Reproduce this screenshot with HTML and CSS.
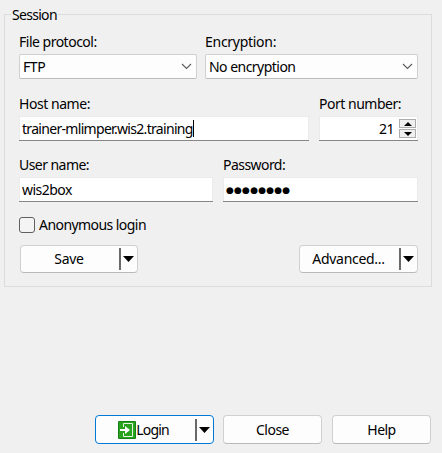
FILE: index.html
```html
<!DOCTYPE html>
<html lang="en">
<head>
<meta charset="utf-8">
<title>Login</title>
<link rel="stylesheet" href="styles.css">
</head>
<body>
<main class="dialog">
  <section class="group">
    <h1 class="legend"><span class="t-session">Session</span></h1>
    <div class="row row-protocol">
      <div class="field">
        <span class="label t-file">File protocol:</span>
        <div class="select"><span class="t-ftp">FTP</span><svg class="chevron" viewBox="0 0 11 7"><path d="M1 1l4.5 4.5L10 1"/></svg></div>
      </div>
      <div class="field">
        <span class="label t-enc">Encryption:</span>
        <div class="select"><span class="t-noenc">No encryption</span><svg class="chevron" viewBox="0 0 11 7"><path d="M1 1l4.5 4.5L10 1"/></svg></div>
      </div>
    </div>
    <div class="row row-host">
      <div class="field">
        <span class="label t-host">Host name:</span>
        <div class="input"><span class="t-trainer">trainer-mlimper.wis2.training</span><i class="caret"></i></div>
      </div>
      <div class="field">
        <span class="label t-port">Port number:</span>
        <div class="input number"><span class="t-21">21</span>
          <div class="spin">
            <div class="step"><svg viewBox="0 0 8 4"><path d="M4 0L8 4H0z"/></svg></div>
            <div class="step"><svg viewBox="0 0 8 4"><path d="M0 0H8L4 4z"/></svg></div>
          </div>
        </div>
      </div>
    </div>
    <div class="row row-user">
      <div class="field">
        <span class="label t-user">User name:</span>
        <div class="input"><span class="t-wis">wis2box</span></div>
      </div>
      <div class="field">
        <span class="label t-pass">Password:</span>
        <div class="input password"><span class="bullets">●●●●●●●●</span></div>
      </div>
    </div>
    <div class="check"><i class="box"></i><span class="t-anon">Anonymous login</span></div>
    <div class="actions">
      <div class="button split save"><div class="face"><span class="t-save">Save</span></div><i class="divider"></i><svg class="arrow" viewBox="0 0 11 6"><path d="M0 0H11L5.5 6z"/></svg></div>
      <div class="button split"><div class="face"><span class="t-adv">Advanced...</span></div><i class="divider"></i><svg class="arrow" viewBox="0 0 11 6"><path d="M0 0H11L5.5 6z"/></svg></div>
    </div>
  </section>
  <footer class="footer">
    <div class="button split default"><div class="face"><svg class="icon" viewBox="0 0 18 18"><rect width="18" height="18" rx="1" fill="#168016"/><rect x="1" y="1" width="16" height="16" fill="#29a31f"/><path d="M5.5 6V2.5H14.5V15.5H5.5V12" fill="none" stroke="#e4f6e0" stroke-width="1"/><path d="M2 8H7V5L12 9L7 13V10H2z" fill="#fff"/></svg><span class="t-login">Login</span></div><i class="divider"></i><svg class="arrow" viewBox="0 0 11 6"><path d="M0 0H11L5.5 6z"/></svg></div>
    <div class="button"><span class="t-close">Close</span></div>
    <div class="button"><span class="t-help">Help</span></div>
  </footer>
</main>
</body>
</html>
```
FILE: styles.css
```css
* { box-sizing: border-box; }
body { margin: 0; background: #f0f0f0; color: #000; font: 14px/18px "Noto Sans", "Open Sans", sans-serif; letter-spacing: -0.53px; }
.dialog { width: 442px; height: 453px; padding: 14px 11px 0 4px; overflow: hidden; }
.group { height: 273px; width: 428px; border: 1px solid #dcdcdc; padding: 0 13px 0 14px; }
.legend { margin: -9px 0 0 -8px; height: 18px; font: inherit; }
.legend span { display: inline-block; background: #f0f0f0; padding: 0 1px; letter-spacing: -0.7px; }
span { white-space: nowrap; }
.row { display: grid; }
.row-protocol { grid-template-columns: 178px 213px; gap: 8px; margin-top: 9px; }
.row-host { grid-template-columns: 290px 99px; gap: 10px; margin-top: 16px; }
.row-user { grid-template-columns: 194px 195px; gap: 10px; margin-top: 15px; }
.label { display: block; height: 21px; }
.select, .input { display: flex; align-items: center; height: 25px; background: #fff; color: #000; }
.select { background: #fdfdfd; border: 1px solid #d0d0d0; border-bottom-color: #bcbcbc; border-radius: 2px; padding: 0 4px 0 3px; justify-content: space-between; }
.chevron { width: 11px; height: 7px; fill: none; stroke: #5c5c5c; stroke-width: 1.1; }
.input { box-shadow: inset 0 -1px #868686, inset 0 0 0 1px #ebebeb; padding: 0 3px; }
.t-trainer { letter-spacing: -0.69px; margin-right: 0.5px; }
.t-port, .t-21 { letter-spacing: -0.48px; }
.t-host { letter-spacing: -0.45px; }
.t-file { letter-spacing: -0.5px; }
.t-enc { letter-spacing: -0.28px; }
.t-ftp { letter-spacing: -0.4px; }
.t-user, .t-pass { letter-spacing: -0.55px; }
.t-anon { letter-spacing: -0.56px; }
.t-adv { letter-spacing: -0.3px; margin-right: 2px; }
.caret { width: 1px; height: 17px; background: #000; }
.number { justify-content: flex-end; padding-right: 2px; gap: 5px; }
.spin { display: grid; gap: 1px; }
.step { display: grid; place-items: center; width: 17px; height: 9px; background: #f0f0f0; border: 1px solid #adadad; }
.step svg { width: 8px; height: 4px; }
.bullets { font: 9px/18px "DejaVu Sans", sans-serif; letter-spacing: 0.2px; }
.check { display: flex; gap: 4px; align-items: center; height: 18px; margin-top: 14px; }
.box { width: 16px; height: 16px; border: 1px solid #606060; border-radius: 3px; background: #f4f4f4; }
.actions { display: flex; justify-content: space-between; margin: 11px 0 0 1px; }
.button { display: flex; align-items: center; justify-content: center; width: 99px; height: 29px; background: #fdfdfd; border: 1px solid #d0d0d0; border-bottom-color: #bababa; border-radius: 4px; }
.split { width: 119px; padding-right: 3px; }
.save { width: 118px; }
.t-save { margin-right: 2px; letter-spacing: -0.3px; }
.actions .button { height: 28px; }
.face { flex: 1; display: flex; align-items: center; justify-content: center; }
.divider { width: 2px; height: 22px; background: #696969; margin-right: 2px; }
.arrow { width: 11px; height: 6px; }
.footer { display: flex; justify-content: flex-end; margin: 128px 0 0; gap: 10px; }
.footer .split { margin-right: -1px; }
.button.default { border-color: #0078d4; }
.icon { width: 18px; height: 18px; }
.t-login { letter-spacing: -0.85px; margin-right: 4px; }
```
